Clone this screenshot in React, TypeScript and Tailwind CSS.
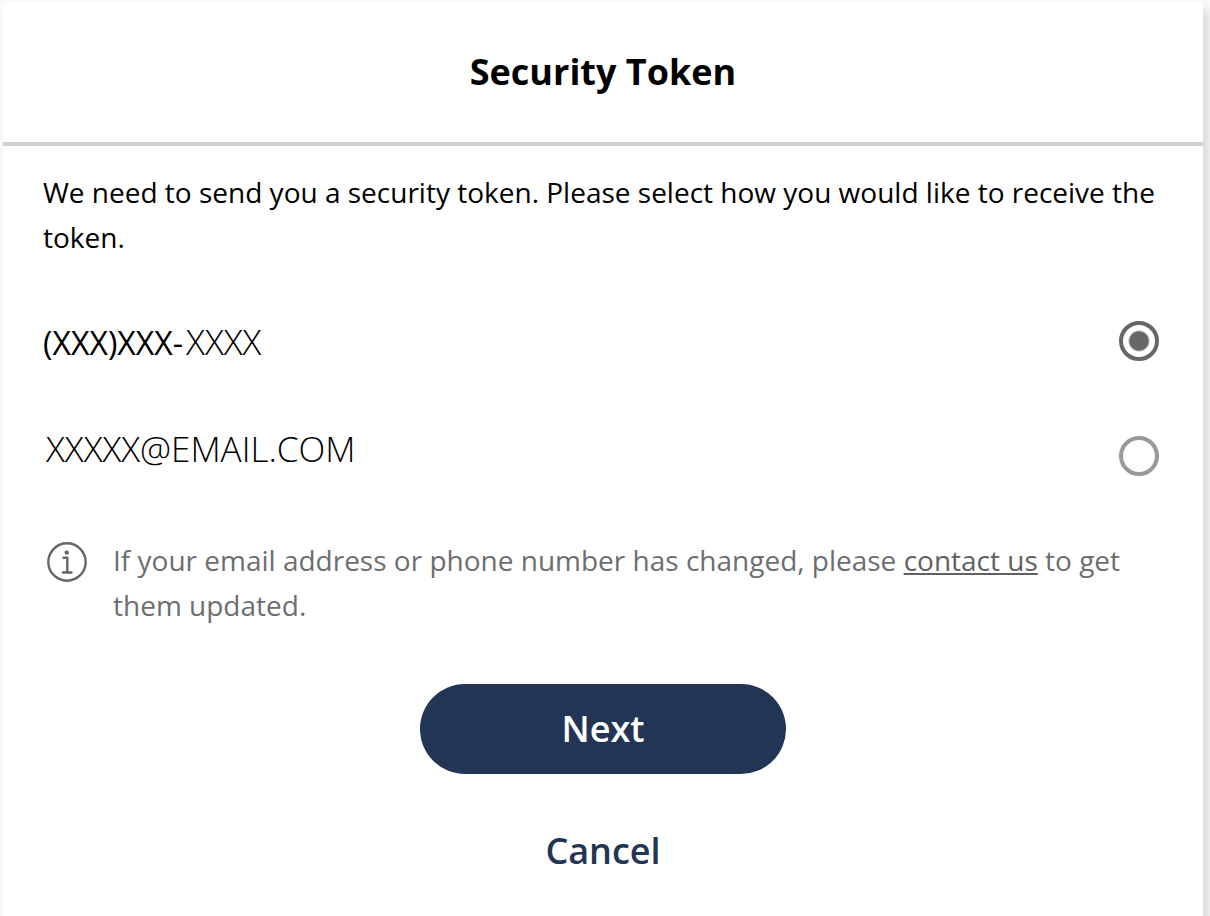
const options = [
  { id: "phone", prefix: "(XXX)XXX-", label: "XXXX" },
  { id: "email", prefix: "", label: "XXXXX@EMAIL.COM" },
];

export default function App() {
  return (
    <div className="flex min-h-screen flex-col overflow-hidden bg-[#fafafa] pt-[2px] pr-[7px] pl-[3px] font-['Open_Sans',sans-serif] text-black">
      <main className="grow bg-white shadow-[6px_8px_10px_rgba(0,0,0,0.13)]">
        <header className="border-b-4 border-[#d0cfd4] py-[42px] text-center">
          <h1 className="text-[36px] leading-[56px] font-bold">Security Token</h1>
        </header>

        <form className="px-10 pt-[24px]" onSubmit={(e) => e.preventDefault()}>
          <p className="text-[28px] leading-[45px]">
            We need to send you a security token. Please select how you would like to receive the token.
          </p>

          {/* Delivery options */}
          <div className="mt-[61px] flex justify-between pr-1">
            <div className="flex flex-col items-start gap-16">
              {options.map((option) => (
                <label key={option.id} htmlFor={option.id} className="text-[32px] leading-[42px]">
                  {option.prefix}
                  <span className="pl-[3px] text-[35px] font-light">{option.label}</span>
                </label>
              ))}
            </div>
            <div className="flex flex-col gap-[75px]">
              {options.map((option) => (
                <input
                  key={option.id}
                  id={option.id}
                  type="radio"
                  name="delivery"
                  defaultChecked={option.id === "phone"}
                  className="size-10 appearance-none rounded-full border-4 border-[#999] checked:border-[#666] checked:bg-[radial-gradient(circle,#666_9px,transparent_11px)]"
                />
              ))}
            </div>
          </div>

          {/* Contact note */}
          <div className="mt-[62px] flex gap-[26px] pr-10 pl-1 text-[#6d6e71]">
            <svg viewBox="0 0 40 40" className="mt-1 size-10 shrink-0 text-[#666]" fill="none" stroke="currentColor" strokeWidth="2.4" aria-hidden="true">
              <circle cx="20" cy="20" r="18.7" />
              <path d="M16.5 15.8H20.3V30.5M16 30.5H24.5" strokeLinecap="round" strokeLinejoin="round" />
              <circle cx="19.8" cy="10.6" r="2.2" fill="currentColor" stroke="none" />
            </svg>
            <p className="text-[28px] leading-[45px]">
              If your email address or phone number has changed, please{" "}
              <a href="#contact" className="text-[#606060] underline">contact us</a> to get them updated.
            </p>
          </div>

          <div className="mt-[56px] flex flex-col items-center gap-8">
            <button type="submit" className="h-[90px] w-[366px] rounded-full bg-[#223555] text-[36px] font-semibold text-white">
              Next
            </button>
            <button type="button" className="h-[90px] w-[366px] text-[36px] font-semibold text-[#223555]">
              Cancel
            </button>
          </div>
        </form>
      </main>
    </div>
  );
}
